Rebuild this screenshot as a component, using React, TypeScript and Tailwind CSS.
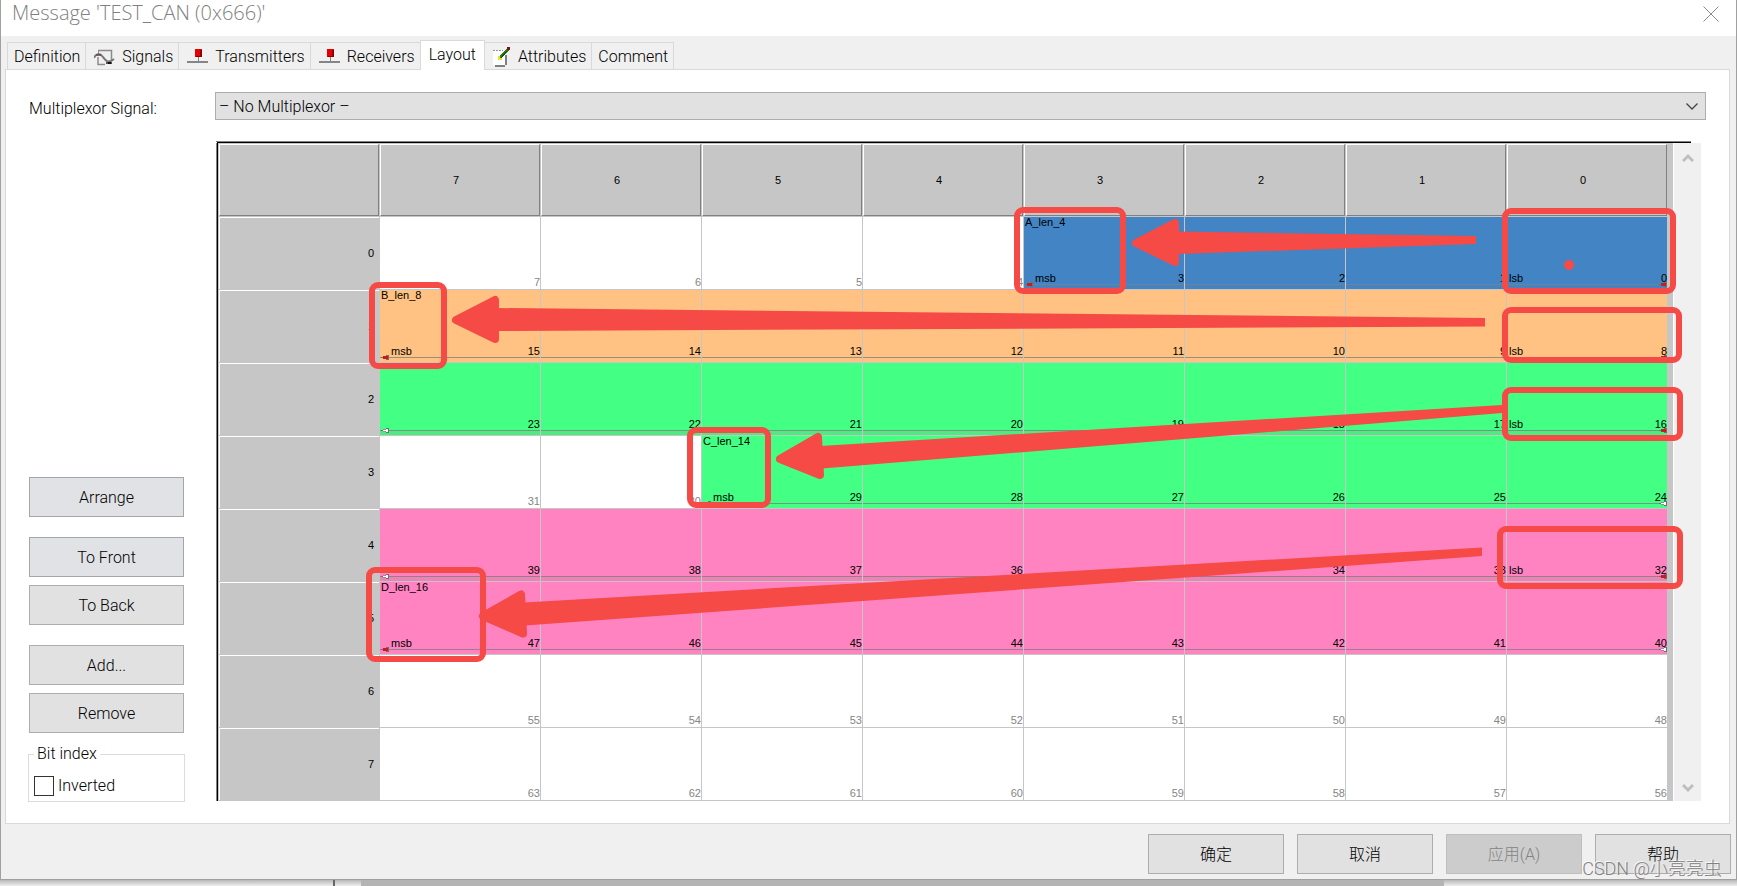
import type { ReactNode } from "react";

type Bit = {
    color: string;
    name?: string;
    edge?: "msb" | "lsb";
    marker?: "red" | "white";
    tinted?: boolean;
};

const BLUE = "bg-[#4384c4]";
const ORANGE = "bg-[#ffc282]";
const GREEN = "bg-[#43ff83]";
const PINK = "bg-[#ff83c0]";

const columns = [7, 6, 5, 4, 3, 2, 1, 0];
const rows = [0, 1, 2, 3, 4, 5, 6, 7];

function getBit(row: number, col: number): Bit | null {
    if (row === 0 && col <= 3) {
        if (col === 3) return { color: BLUE, name: "A_len_4", edge: "msb", marker: "red" };
        if (col === 0) return { color: BLUE, edge: "lsb", marker: "red" };
        return { color: BLUE };
    }
    if (row === 1) {
        if (col === 7) return { color: ORANGE, name: "B_len_8", edge: "msb", marker: "red" };
        if (col === 0) return { color: ORANGE, edge: "lsb", marker: "red" };
        return { color: ORANGE };
    }
    if (row === 2) {
        if (col === 7) return { color: GREEN, marker: "white", tinted: true };
        if (col === 0) return { color: GREEN, edge: "lsb", marker: "red", tinted: true };
        return { color: GREEN, tinted: true };
    }
    if (row === 3 && col <= 5) {
        if (col === 5) return { color: GREEN, name: "C_len_14", edge: "msb", marker: "red" };
        if (col === 0) return { color: GREEN, marker: "white" };
        return { color: GREEN };
    }
    if (row === 4) {
        if (col === 7) return { color: PINK, marker: "white", tinted: true };
        if (col === 0) return { color: PINK, edge: "lsb", marker: "red", tinted: true };
        return { color: PINK, tinted: true };
    }
    if (row === 5) {
        if (col === 7) return { color: PINK, name: "D_len_16", edge: "msb", marker: "red" };
        if (col === 0) return { color: PINK, marker: "white" };
        return { color: PINK };
    }
    return null;
}

function Marker({ kind, side }: { kind: "red" | "white"; side: "left" | "right" }) {
    const fill = kind === "red" ? "#e01010" : "#ffffff";
    return (
        <svg
            viewBox="0 0 8 5"
            className={side === "left" ? "absolute bottom-0.5 left-px h-[5px] w-2" : "absolute right-0 bottom-0.5 h-[5px] w-2"}
            shapeRendering="crispEdges"
        >
            <rect x="0" y="2" width="2" height="1" fill="#707070" />
            <rect x="2" y="1" width="3" height="3" fill={kind === "red" ? "#a03028" : "#909090"} />
            <rect x="2" y="2" width="4" height="1" fill={fill} />
            <rect x="5" y="0" width="3" height="5" fill="#707070" />
            <rect x="5" y="1" width="2" height="3" fill={fill} />
        </svg>
    );
}

function BitCell({ row, col }: { row: number; col: number }) {
    const bit = getBit(row, col);
    const index = row * 8 + col;

    if (!bit) {
        return (
            <td className="border-r border-b border-[#c6c6c6] bg-white p-0">
                <div className="flex h-18 items-end justify-end pb-px text-[#858585]">{index}</div>
            </td>
        );
    }

    return (
        <td className={`border-r border-b border-[#c6c6c6] p-0 ${bit.color}`}>
            <div className="relative flex h-18 flex-col justify-between">
                <div className="h-3 pl-px leading-[10px]">{bit.name}</div>
                <div>
                    <div className="flex justify-between">
                        <span className={bit.edge === "lsb" ? "pl-0.5" : "pl-[11px]"}>{bit.edge}</span>
                        <span>{index}</span>
                    </div>
                    <div className={bit.tinted ? "h-[5px] border-t border-[#808080]/80 bg-[#808080]/15" : "h-[5px] border-t border-[#808080]/80"} />
                </div>
                {bit.marker && <Marker kind={bit.marker} side={col === 0 ? "right" : "left"} />}
            </div>
        </td>
    );
}

function LayoutGrid() {
    return (
        <table className="w-full table-fixed border-separate border-spacing-0 font-['Liberation_Sans',Arial,sans-serif] text-[11px] leading-3 text-black">
            <thead>
                <tr>
                    <th className="border-r border-b border-[#c6c6c6] p-0">
                        <div className="h-18 border border-t-white border-r-[#808080] border-b-[#808080] border-l-white" />
                    </th>
                    {columns.map((col) => (
                        <th key={col} className="border-r border-b border-[#c6c6c6] p-0 font-normal">
                            <div className="flex h-18 items-center justify-center border border-t-white border-r-[#808080] border-b-[#808080] border-l-white pr-2">
                                {col}
                            </div>
                        </th>
                    ))}
                </tr>
            </thead>
            <tbody>
                {rows.map((row) => (
                    <tr key={row}>
                        <th className="border-r border-b border-[#c6c6c6] p-0 font-normal">
                            <div className="flex h-18 items-center justify-end border-t border-l border-white pr-[5px] pb-0.5">{row}</div>
                        </th>
                        {columns.map((col) => (
                            <BitCell key={col} row={row} col={col} />
                        ))}
                    </tr>
                ))}
            </tbody>
        </table>
    );
}

// Hand-drawn red frames and arrows on top of the grid
function Annotations() {
    return (
        <svg
            viewBox="216 141 1485 660"
            preserveAspectRatio="none"
            className="pointer-events-none absolute inset-0 h-full w-full overflow-visible"
        >
            <g fill="none" stroke="#f54a45" strokeWidth="6">
                <rect x="1017" y="210" width="106" height="81" rx="6" />
                <rect x="372" y="285" width="72" height="81" rx="6" />
                <rect x="690" y="430" width="78" height="75" rx="6" />
                <rect x="369" y="570" width="114" height="89" rx="6" />
                <rect x="1505" y="211" width="168" height="80" rx="6" />
                <rect x="1505" y="310" width="174" height="50" rx="6" />
                <rect x="1505" y="390" width="175" height="48" rx="6" />
                <rect x="1500" y="529" width="180" height="57" rx="6" />
            </g>
            <g fill="#f54a45">
                <path d="M1177 231.5 L1476 236 V244 L1177 254 Z" />
                <path d="M497 308 L1485 318 V326.5 L497 331 Z" />
                <path d="M820 446 L1502 405 V413 L822 468.5 Z" />
                <path d="M524 602.5 L1482 547.5 V556 L525 625.5 Z" />
                <circle cx="1569" cy="265" r="5" />
            </g>
            <g fill="#f54a45" stroke="#f54a45" strokeWidth="8" strokeLinejoin="round">
                <path d="M1136 243 L1175 223 V262 Z" />
                <path d="M456 320 L495 300 V339 Z" />
                <path d="M780 459 L818 437 L820 475 Z" />
                <path d="M483 616 L521 594.5 L523 633.5 Z" />
            </g>
        </svg>
    );
}

function SignalIcon() {
    return (
        <svg viewBox="0 0 21 17" className="h-[17px] w-[21px]" fill="none">
            <path d="M4 1.500 H17.500 V12" stroke="#8c8c8c" strokeWidth="1.500" />
            <path d="M4 8 V15.500 H11" stroke="#8c8c8c" strokeWidth="1.500" />
            <path d="M4.500 2 V6" stroke="#8c8c8c" />
            <path d="M0 9 C2 4 6 4 9 8 S14 15 20 10" stroke="#777" strokeWidth="2" />
            <path d="M2 6 H7" stroke="#604060" strokeWidth="1.500" />
            <path d="M12 14 H18" stroke="#555" strokeWidth="2" />
            <path d="M14 14 H17" stroke="#111" strokeWidth="2" />
        </svg>
    );
}

function NodeIcon() {
    return (
        <svg viewBox="0 0 21 16" className="h-4 w-[21px]" shapeRendering="crispEdges">
            <rect x="8" y="0" width="7" height="8" fill="#e80000" />
            <path d="M13 1 H15 V8 H9 V7 H13 Z" fill="#8a0000" />
            <rect x="11" y="8" width="1" height="4" fill="#808080" />
            <rect x="0" y="12" width="21" height="2" fill="#868686" />
        </svg>
    );
}

function AttributeIcon() {
    return (
        <svg viewBox="0 0 18 20" className="h-5 w-[18px]" shapeRendering="crispEdges">
            <rect x="0" y="3" width="13" height="15" fill="#fff" />
            <path d="M0 3.500 H10" stroke="#909090" strokeDasharray="2 1" />
            <path d="M13 8 V18 M2 18.500 H12" stroke="#808080" strokeWidth="2" />
            <path d="M6 12 L15 2.500" stroke="#2c7d14" strokeWidth="3" />
            <path d="M8 11 L14 4" stroke="#155008" strokeWidth="1" />
            <rect x="14" y="0" width="3" height="3" fill="#7a1414" />
            <path d="M5 9 H7 V11 H9 V13 H5 Z" fill="#e8e030" />
        </svg>
    );
}

function Tab({ text, icon, active }: { text: string; icon?: ReactNode; active?: boolean }) {
    if (active) {
        return (
            <button
                type="button"
                role="tab"
                aria-selected="true"
                className="relative -mb-px -ml-px flex h-[30px] items-center border border-b-0 border-[#d9d9d9] bg-white px-2 pb-0.5"
            >
                {text}
            </button>
        );
    }
    return (
        <button
            type="button"
            role="tab"
            aria-selected="false"
            className={`-ml-px flex h-[27px] items-center gap-[7px] border border-b-0 border-[#d9d9d9] bg-[#f0f0f0] pt-0.5 pr-[5px] ${icon ? "pl-2" : "pl-[6px]"}`}
        >
            {icon}
            {text}
        </button>
    );
}

function SideButton({ text, className = "" }: { text: string; className?: string }) {
    return (
        <button type="button" className={`mx-px h-10 border pt-0.5 ${className}`}>
            {text}
        </button>
    );
}

function FooterButton({ text, disabled }: { text: string; disabled?: boolean }) {
    return (
        <button
            type="button"
            disabled={disabled}
            className="h-10 w-[136px] border border-[#adadad] bg-[#e1e1e1] pt-0.5 disabled:border-[#bfbfbf] disabled:bg-[#cccccc] disabled:text-[#838383]"
        >
            {text}
        </button>
    );
}

export default function App() {
    return (
        <div className="bg-[#e4e4e4] font-[Roboto,'Noto_Sans_CJK_SC',sans-serif] text-base leading-5 font-light text-black">
            <div className="relative border-x border-b border-[#a0a0a0] bg-[#f0f0f0]">
                <header className="flex h-9 items-start justify-between bg-white pr-4 pl-[11px]">
                    <h1 className="font-['Open_Sans','Noto_Sans',sans-serif] text-xl leading-[26px] font-light text-[#808080]">
                        Message &apos;TEST_CAN (0x666)&apos;
                    </h1>
                    <button type="button" aria-label="Close" className="mt-1.5 mr-px">
                        <svg viewBox="0 0 16 16" className="h-4 w-4" stroke="#8a8a8a" fill="none">
                            <path d="M0.500 0.500 L15.500 15.500 M15.500 0.500 L0.500 15.500" />
                        </svg>
                    </button>
                </header>

                <div role="tablist" className="flex h-[33px] items-end pl-[7px]">
                    <Tab text="Definition" />
                    <Tab text="Signals" icon={<SignalIcon />} />
                    <Tab text="Transmitters" icon={<NodeIcon />} />
                    <Tab text="Receivers" icon={<NodeIcon />} />
                    <Tab text="Layout" active />
                    <Tab text="Attributes" icon={<AttributeIcon />} />
                    <Tab text="Comment" />
                </div>

                <main className="mr-[6px] ml-1 border border-[#d9d9d9] bg-white pt-[22px] pr-[23px] pb-[22px] pl-[22px]">
                    <div className="grid grid-cols-[187px_1fr] gap-y-[21px]">
                        <label htmlFor="mux" className="self-center pt-1.5 pl-px">
                            Multiplexor Signal:
                        </label>
                        <div className="relative">
                            <select
                                id="mux"
                                className="block h-7 w-full appearance-none border border-[#adadad] bg-[#e1e1e1] px-[3px] pt-0.5"
                            >
                                <option>– No Multiplexor –</option>
                            </select>
                            <svg viewBox="0 0 12 7" className="absolute top-[11px] right-2 h-[7px] w-3" fill="none" stroke="#444" strokeWidth="1.300">
                                <path d="M0.500 0.500 L6 6 L11.500 0.500" />
                            </svg>
                        </div>

                        <div className="-mb-px flex w-[157px] flex-col justify-end">
                            <SideButton text="Arrange" className="mb-5 border-[#a3a7ab] bg-[#e0e2e5]" />
                            <SideButton text="To Front" className="mb-2 border-[#a3a7ab] bg-[#e0e2e5]" />
                            <SideButton text="To Back" className="mb-5 border-[#adadad] bg-[#e1e1e1]" />
                            <SideButton text="Add..." className="mb-2 border-[#adadad] bg-[#e1e1e1]" />
                            <SideButton text="Remove" className="mb-[11px] border-[#adadad] bg-[#e1e1e1]" />
                            <fieldset className="border border-[#dcdcdc] px-[5px] pb-[5px]">
                                <legend className="px-[3px]">Bit index</legend>
                                <label className="flex items-center gap-1 pt-3">
                                    <input type="checkbox" className="h-5 w-5 appearance-none border border-[#333] bg-white" />
                                    Inverted
                                </label>
                            </fieldset>
                        </div>

                        <div className="relative mr-[5px] ml-px">
                            <div className="mr-2.5 border-t border-[#808080] pl-px">
                                <div className="border-t border-black" />
                            </div>
                            <div className="flex">
                                <div className="flex-1 border-l border-[#808080]">
                                    <div className="border-l border-black">
                                        <div className="border-t border-l border-[#c6c6c6] bg-[#c6c6c6] pr-[5px]">
                                            <LayoutGrid />
                                        </div>
                                    </div>
                                </div>
                                <div className="flex w-7 flex-col items-center justify-between border-l border-white bg-[#f0f0f0] pt-2.5 pb-2">
                                    <svg viewBox="0 0 12 9" className="h-[9px] w-3" fill="none" stroke="#bfbfbf" strokeWidth="3">
                                        <path d="M1 8 L6 3 L11 8" />
                                    </svg>
                                    <svg viewBox="0 0 12 9" className="h-[9px] w-3" fill="none" stroke="#bfbfbf" strokeWidth="3">
                                        <path d="M1 1 L6 6 L11 1" />
                                    </svg>
                                </div>
                            </div>
                            <Annotations />
                        </div>
                    </div>
                </main>

                <footer className="flex justify-end gap-[13px] pt-2.5 pr-[5px] pb-[5px]">
                    <FooterButton text="确定" />
                    <FooterButton text="取消" />
                    <FooterButton text="应用(A)" disabled />
                    <FooterButton text="帮助" />
                </footer>

                <span className="absolute right-3.5 bottom-0 text-lg leading-5 text-[#808080] [text-shadow:-1px_-1px_0_#ffffffcc]">
                    CSDN @小亮亮虫
                </span>
            </div>

            {/* Sliver of the window behind the dialog */}
            <div className="flex h-[6px] bg-linear-to-b from-[#b8b8b8] to-[#eeeeee]">
                <div className="w-[335px] border-r-2 border-[#666]" />
                <div className="w-[26px]" />
                <div className="w-[1083px] bg-[#b4b4b4]" />
            </div>
        </div>
    );
}
